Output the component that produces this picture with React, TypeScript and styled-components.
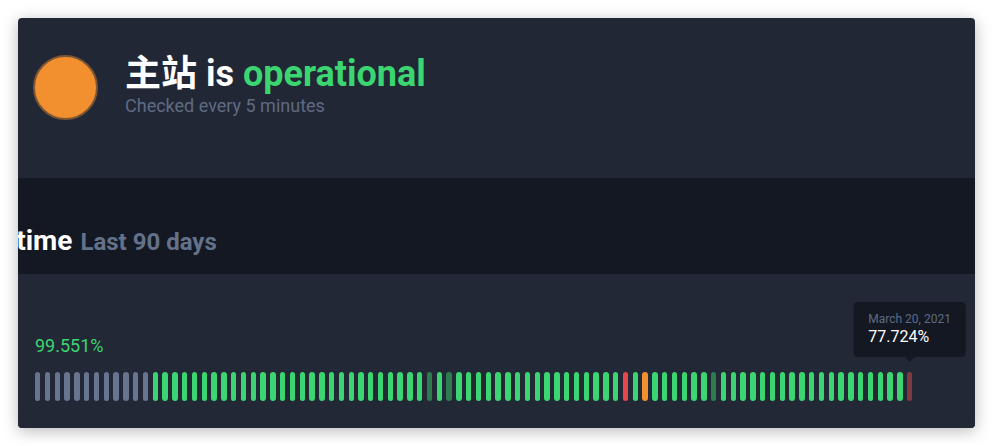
import { ReactElement } from 'react';
import styled, { createGlobalStyle } from 'styled-components';

type BarKind = 'none' | 'up' | 'partial' | 'down' | 'warn' | 'hover';

const barColors: Record<BarKind, string> = {
  none: '#687591',
  up: '#3bd671',
  partial: '#2d7b51',
  down: '#e5474b',
  warn: '#f29030',
  hover: '#7f3a41',
};

const days: BarKind[] = Array.from({ length: 90 }, (_, index) => {
  if (index < 12) return 'none';
  if (index === 40 || index === 42 || index === 69) return 'partial';
  if (index === 60) return 'down';
  if (index === 62) return 'warn';
  if (index === 89) return 'hover';
  return 'up';
});

const GlobalStyle = createGlobalStyle`
  * {
    box-sizing: border-box;
  }

  body {
    margin: 0;
    background: #ffffff;
    font-family: Roboto, 'Noto Sans CJK SC', sans-serif;
  }
`;

export default function App(): ReactElement {
  return (
    <>
      <GlobalStyle />
      <Page>
        <Card>
          <Header>
            <StatusDot />
            <HeaderText>
              <Title>
                主站 is <Green>operational</Green>
              </Title>
              <Subtitle>Checked every 5 minutes</Subtitle>
            </HeaderText>
          </Header>

          <Band>
            <SectionTitle>
              Uptime <SectionHint>Last 90 days</SectionHint>
            </SectionTitle>
          </Band>

          <Panel>
            <Percent>99.551%</Percent>
            <Bars>
              {days.map((kind, index) => (
                <Bar key={index} $kind={kind}>
                  {kind === 'hover' && (
                    <Tooltip>
                      <TooltipDate>March 20, 2021</TooltipDate>
                      <TooltipValue>77.724%</TooltipValue>
                    </Tooltip>
                  )}
                </Bar>
              ))}
            </Bars>
          </Panel>
        </Card>
      </Page>
    </>
  );
}

const Page = styled.div`
  padding: 18px;
  width: 993px;
  height: 446px;
`;

const Card = styled.div`
  width: 957px;
  height: 410px;
  background: #212734;
  border-radius: 4px;
  overflow: hidden;
  box-shadow: 0 3px 16px rgba(0, 0, 0, 0.28);
  display: flex;
  flex-direction: column;
`;

const Header = styled.div`
  height: 160px;
  display: flex;
  align-items: flex-start;
  gap: 27px;
  padding: 36px 0 0 15px;
  flex-shrink: 0;
`;

const StatusDot = styled.div`
  width: 65px;
  height: 65px;
  margin-top: 1px;
  border-radius: 50%;
  background: #f29030;
  border: 2px solid #7a5533;
  flex-shrink: 0;
`;

const HeaderText = styled.div`
  display: flex;
  flex-direction: column;
`;

const Title = styled.h1`
  margin: 0;
  font-size: 36px;
  line-height: 40px;
  font-weight: 700;
  color: #ffffff;
  white-space: nowrap;
`;

const Green = styled.span`
  color: #3bd671;
`;

const Subtitle = styled.div`
  margin-top: 0;
  font-size: 18px;
  line-height: 24px;
  color: #5f6b83;
`;

const Band = styled.div`
  height: 96px;
  background: #131823;
  padding-top: 47px;
  flex-shrink: 0;
`;

const SectionTitle = styled.h2`
  margin: 0 0 0 -36px;
  font-size: 28px;
  line-height: 32px;
  font-weight: 700;
  color: #ffffff;
  white-space: nowrap;
`;

const SectionHint = styled.span`
  margin-left: 1px;
  font-size: 24px;
  color: #64718a;
`;

const Panel = styled.div`
  flex: 1;
  background: #222836;
  border-radius: 4px;
  padding: 60px 0 0 17px;
`;

const Percent = styled.div`
  font-size: 18px;
  line-height: 24px;
  color: #3bd671;
  margin-bottom: 14px;
`;

const Bars = styled.div`
  display: flex;
  gap: 4.41px;
`;

const Bar = styled.div<{ $kind: BarKind }>`
  position: relative;
  width: 5.4px;
  height: 29px;
  border-radius: 3px;
  background: ${(p) => barColors[p.$kind]};
  flex-shrink: 0;
`;

const Tooltip = styled.div`
  position: absolute;
  bottom: calc(100% + 15px);
  left: 50%;
  transform: translateX(-50%);
  padding: 9px 15px 10px;
  background: #131823;
  border-radius: 4px;
  white-space: nowrap;

  &::after {
    content: '';
    position: absolute;
    top: 100%;
    left: 50%;
    margin-left: -5px;
    border: 5px solid transparent;
    border-top-color: #131823;
    border-bottom: 0;
  }
`;

const TooltipDate = styled.div`
  font-size: 12px;
  line-height: 16px;
  color: #5f6b83;
`;

const TooltipValue = styled.div`
  font-size: 16px;
  line-height: 20px;
  color: #ffffff;
`;
